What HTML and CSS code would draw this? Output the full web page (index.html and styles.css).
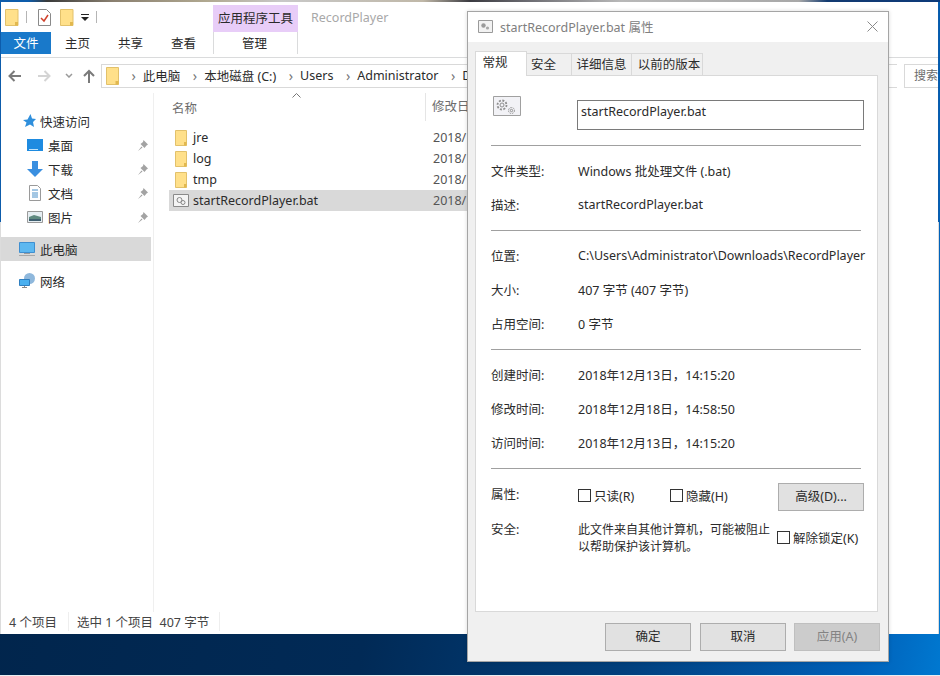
FILE: index.html
```html
<!DOCTYPE html>
<html lang="en">
<head>
    <meta charset="UTF-8">
    <title>startRecordPlayer.bat 属性</title>
    <link rel="stylesheet" href="styles.css">
</head>
<body>
<div class="desktop">
    <div class="explorer">
        <div class="titlebar">
            <svg class="qa-icon" width="14" height="17" viewBox="0 0 14 17"><path d="M.5.5h12.500v16H.5z" fill="#ffe08a" stroke="#e2c16b"/><path d="M10 13h3v3.500h-3z" fill="#e2b84f"/></svg>
            <span class="qa-sep"></span>
            <svg class="qa-icon qa-doc" width="13" height="17" viewBox="0 0 13 17"><path d="M.5.5h8l4 4v12H.500z" fill="#fff" stroke="#8a8a8a"/><path d="M3 9l3 3 4-6" fill="none" stroke="#d0412b" stroke-width="1.500"/></svg>
            <svg class="qa-icon" width="14" height="17" viewBox="0 0 14 17"><path d="M.5.5h12.500v16H.5z" fill="#ffe08a" stroke="#e2c16b"/><path d="M10 13h3v3.500h-3z" fill="#e2b84f"/></svg>
            <svg class="qa-icon" width="8" height="7" viewBox="0 0 8 7"><path d="M0 0h8v1H0zM0 3h8L4 7z" fill="#222"/></svg>
            <span class="qa-sep"></span>
            <div class="context-tab">应用程序工具</div>
            <div class="window-name">RecordPlayer</div>
        </div>
        <div class="tabbar">
            <div class="tab tab-file">文件</div>
            <div class="tab">主页</div>
            <div class="tab">共享</div>
            <div class="tab">查看</div>
            <div class="tab tab-manage">管理</div>
        </div>
        <div class="addressbar">
            <div class="nav-buttons">
                <svg width="13" height="12" viewBox="0 0 13 12"><path d="M13 6H2M6.500 1 1.500 6l5 5" fill="none" stroke="#7a7a7a" stroke-width="2"/></svg>
                <svg width="13" height="12" viewBox="0 0 13 12"><path d="M0 6h11M6.500 1l5 5-5 5" fill="none" stroke="#d4d4d4" stroke-width="2"/></svg>
                <svg width="8" height="5" viewBox="0 0 8 5"><path d="M1 1l3 3 3-3" fill="none" stroke="#9a9a9a" stroke-width="1.500"/></svg>
                <svg width="12" height="14" viewBox="0 0 12 14"><path d="M6 14V2M1 7l5-5 5 5" fill="none" stroke="#7a7a7a" stroke-width="2"/></svg>
            </div>
            <div class="path-box">
                <svg width="13" height="18" viewBox="0 0 13 18"><path d="M.5.5h12v17H.5z" fill="#ffe08a" stroke="#e2c16b"/><path d="M9.500 14h3v3.500h-3z" fill="#e2b84f"/></svg>
                <span class="crumb-sep">›</span><span>此电脑</span>
                <span class="crumb-sep">›</span><span>本地磁盘 (C:)</span>
                <span class="crumb-sep">›</span><span>Users</span>
                <span class="crumb-sep">›</span><span>Administrator</span>
                <span class="crumb-sep">›</span><span>D</span>
            </div>
            <div class="search-box">搜索</div>
        </div>
        <div class="main">
            <div class="sidebar">
                <div class="side-row side-head">
                    <svg width="14" height="14" viewBox="0 0 14 14"><path d="M8.500 0l1.500 4.500 4 .5-3 3 1 5-4-2.500L3 13l1.500-4.500L1 6l4.500-.5z" fill="#2f8fdc"/></svg>
                    <span>快速访问</span>
                </div>
                <div class="side-row side-sub">
                    <svg width="16" height="12" viewBox="0 0 16 12"><path d="M0 0h16v12H0z" fill="#1e8be0"/><path d="M2 10h9v1H2z" fill="#bfe3fb"/></svg>
                    <span>桌面</span><svg class="pin" width="10" height="11" viewBox="0 0 10 11"><path d="M5.500 0L10 4.500 8.500 5.500 6.500 8 2.500 4 5 2zM3.500 6.500L0 11l4.500-3.500z" fill="#a3a3a3"/></svg>
                </div>
                <div class="side-row side-sub">
                    <svg width="16" height="16" viewBox="0 0 16 16"><path d="M5 0h6v8h5l-8 8-8-8h5z" fill="#3a8fe0"/></svg>
                    <span>下载</span><svg class="pin" width="10" height="11" viewBox="0 0 10 11"><path d="M5.500 0L10 4.500 8.500 5.500 6.500 8 2.500 4 5 2zM3.500 6.500L0 11l4.500-3.500z" fill="#a3a3a3"/></svg>
                </div>
                <div class="side-row side-sub">
                    <svg width="16" height="16" viewBox="0 0 16 16"><path d="M2.500.5h8l3 3v12h-11z" fill="#fff" stroke="#9a9a9a"/><path d="M5 5h6M5 8h6M5 10h6M5 12h6" stroke="#4a90c8"/></svg>
                    <span>文档</span><svg class="pin" width="10" height="11" viewBox="0 0 10 11"><path d="M5.500 0L10 4.500 8.500 5.500 6.500 8 2.500 4 5 2zM3.500 6.500L0 11l4.500-3.500z" fill="#a3a3a3"/></svg>
                </div>
                <div class="side-row side-sub">
                    <svg width="16" height="12" viewBox="0 0 16 12"><path d="M.5.5h15v11H.5z" fill="#e6eef2" stroke="#9a9a9a"/><path d="M2 6l5-2 7 2v2H2z" fill="#5f8a80"/><path d="M2 8h12v2H2z" fill="#3f5f70"/></svg>
                    <span>图片</span><svg class="pin" width="10" height="11" viewBox="0 0 10 11"><path d="M5.500 0L10 4.500 8.500 5.500 6.500 8 2.500 4 5 2zM3.500 6.500L0 11l4.500-3.500z" fill="#a3a3a3"/></svg>
                </div>
                <div class="side-row side-pc">
                    <svg width="16" height="15" viewBox="0 0 16 15"><path d="M.5.5h15v10H.5z" fill="#5db8f0" stroke="#3f8fd0"/><path d="M5 11h6v1H5z" fill="#9a9a9a"/><path d="M0 13h16v1H0z" fill="#a8a8a8"/></svg>
                    <span>此电脑</span>
                </div>
                <div class="side-row side-net">
                    <svg width="16" height="16" viewBox="0 0 16 16"><circle cx="10.500" cy="5.500" r="5.500" fill="#8fb8dc"/><path d="M.5 6.500h10v6H.5z" fill="#4ab0f0" stroke="#2f7fc0"/><path d="M5 13h1v1H5zM3 14h5v1H3z" fill="#8a8a8a"/></svg>
                    <span>网络</span>
                </div>
            </div>
            <div class="files">
                <div class="file-head">
                    <span class="col-name">名称</span>
                    <span class="col-date">修改日</span>
                    <svg class="sort-caret" width="9" height="5" viewBox="0 0 9 5"><path d="M.5 4.500l4-4 4 4" fill="none" stroke="#777"/></svg>
                </div>
                <div class="file-row">
                    <svg width="12" height="16" viewBox="0 0 12 16"><path d="M.5.5h11v15H.5z" fill="#ffe08a" stroke="#e2c16b"/><path d="M9 12h2.500v3.500H9z" fill="#e2b84f"/></svg>
                    <span class="file-name">jre</span><span class="file-date">2018/1</span>
                </div>
                <div class="file-row">
                    <svg width="12" height="16" viewBox="0 0 12 16"><path d="M.5.5h11v15H.5z" fill="#ffe08a" stroke="#e2c16b"/><path d="M9 12h2.500v3.500H9z" fill="#e2b84f"/></svg>
                    <span class="file-name">log</span><span class="file-date">2018/1</span>
                </div>
                <div class="file-row">
                    <svg width="12" height="16" viewBox="0 0 12 16"><path d="M.5.5h11v15H.5z" fill="#ffe08a" stroke="#e2c16b"/><path d="M9 12h2.500v3.500H9z" fill="#e2b84f"/></svg>
                    <span class="file-name">tmp</span><span class="file-date">2018/1</span>
                </div>
                <div class="file-row file-selected">
                    <svg width="16" height="13" viewBox="0 0 16 13"><path d="M.5.5h15v12H.5z" fill="#f4f4f4" stroke="#8a8a8a"/><circle cx="6.500" cy="6" r="2.500" fill="none" stroke="#888"/><circle cx="10" cy="8.500" r="2" fill="none" stroke="#888"/></svg>
                    <span class="file-name">startRecordPlayer.bat</span><span class="file-date">2018/1</span>
                </div>
            </div>
        </div>
        <div class="statusbar">
            <span class="status-cell">4 个项目</span>
            <span class="status-cell status-selected">选中 1 个项目&nbsp;&nbsp;407 字节</span>
        </div>
    </div>

    <div class="dialog">
        <div class="dialog-title">
            <svg width="15" height="13" viewBox="0 0 15 13"><path d="M.5.5h14v12H.5z" fill="#f2f2f2" stroke="#9a9a9a"/><circle cx="5.500" cy="5.500" r="2.200" fill="#9a9a9a"/><circle cx="9.500" cy="8" r="1.600" fill="#a8a8a8"/></svg>
            <span>startRecordPlayer.bat 属性</span>
            <svg class="dialog-close" width="11" height="11" viewBox="0 0 11 11"><path d="M.5.5l10 10M10.500.5l-10 10" stroke="#8a8a8a"/></svg>
        </div>
        <div class="dialog-body">
            <div class="dialog-tabs">
                <div class="dtab dtab-active">常规</div>
                <div class="dtab dtab-sec">安全</div>
                <div class="dtab dtab-detail">详细信息</div>
                <div class="dtab dtab-prev">以前的版本</div>
            </div>
            <div class="panel">
                <div class="name-row">
                    <svg width="28" height="20" viewBox="0 0 28 20"><path d="M.5.5h27v19H.500z" fill="#f2f2f6" stroke="#a0a0a0"/><g fill="none" stroke="#8f8f8f"><circle cx="9" cy="9" r="2"/><circle cx="9" cy="9" r="4.500" stroke-dasharray="2 1.500" stroke-width="1.800"/><circle cx="18.500" cy="14.500" r="1.200"/><circle cx="18.500" cy="14.500" r="3" stroke-dasharray="1.500 1"/></g></svg>
                    <div class="name-input">startRecordPlayer.bat</div>
                </div>
                <hr class="sep">
                <div class="info-row"><span class="info-label">文件类型:</span><span>Windows 批处理文件 (.bat)</span></div>
                <div class="info-row"><span class="info-label">描述:</span><span>startRecordPlayer.bat</span></div>
                <hr class="sep">
                <div class="info-row"><span class="info-label">位置:</span><span>C:\Users\Administrator\Downloads\RecordPlayer</span></div>
                <div class="info-row"><span class="info-label">大小:</span><span>407 字节 (407 字节)</span></div>
                <div class="info-row"><span class="info-label">占用空间:</span><span>0 字节</span></div>
                <hr class="sep">
                <div class="info-row"><span class="info-label">创建时间:</span><span>2018年12月13日，14:15:20</span></div>
                <div class="info-row"><span class="info-label">修改时间:</span><span>2018年12月18日，14:58:50</span></div>
                <div class="info-row"><span class="info-label">访问时间:</span><span>2018年12月13日，14:15:20</span></div>
                <hr class="sep">
                <div class="attr-row">
                    <span class="info-label">属性:</span>
                    <label class="check check-read"><span class="box"></span>只读(R)</label>
                    <label class="check check-hidden"><span class="box"></span>隐藏(H)</label>
                    <div class="btn btn-adv">高级(D)...</div>
                </div>
                <div class="security-row">
                    <span class="info-label">安全:</span>
                    <div class="security-text">此文件来自其他计算机，可能被阻止<br>以帮助保护该计算机。</div>
                    <label class="check check-unblock"><span class="box"></span>解除锁定(K)</label>
                </div>
            </div>
            <div class="dialog-buttons">
                <div class="btn">确定</div>
                <div class="btn">取消</div>
                <div class="btn btn-disabled">应用(A)</div>
            </div>
        </div>
    </div>
</div>
</body>
</html>
```
FILE: styles.css
```css
* {
    box-sizing: border-box;
}
html, body {
    margin: 0;
    padding: 0;
}
body {
    font-family: "Noto Sans", "Noto Sans CJK SC", sans-serif;
    font-size: 12.5px;
    color: #2b2b2b;
    background-color: #fff;
    overflow: hidden;
}
.desktop {
    position: relative;
    width: 940px;
    height: 676px;
    padding: 2px 1px 41px 0;
    background:
        linear-gradient(90deg, #0d5cab 3%, #3a3a3a 5%, #8a8070 12%, #b0a890 22%, #c8c8c8 30%, #c0b8a8 45%, #3a3a40 50%, #6a6a70 56%, #b8b8b8 66%, #a8a8a8 85%, #123a70 88%, #0d3a7a 100%) top / 100% 2px no-repeat,
        linear-gradient(100deg, #01244a 0%, #012a56 45%, #013f7c 70%, #0060b8 92%, #0078d0 100%);
    border-bottom: 1px solid #e8eef2;
}
svg {
    display: block;
    flex: none;
}

/* explorer window */
.explorer {
    display: flex;
    flex-direction: column;
    height: 632px;
    background-color: #fff;
    border-left: 1px solid;
    border-right: 1px solid;
    border-image: linear-gradient(to bottom, #0d5cab 220px, #dcdcdc 220px) 1;
}
.titlebar {
    display: flex;
    align-items: center;
    height: 30px;
    padding-left: 4px;
}
.qa-icon {
    margin-right: 7px;
}
.qa-doc {
    margin-right: 9px;
}
.qa-sep {
    width: 1px;
    height: 12px;
    background-color: #b5b5b5;
    margin-right: 11px;
}
.context-tab {
    width: 85px;
    height: 27px;
    align-self: flex-end;
    margin-left: 105px;
    background-color: #e8cdf8;
    text-align: center;
    line-height: 27px;
}
.window-name {
    margin-left: 13px;
    color: #a8a8a8;
}
.tabbar {
    display: flex;
    height: 26px;
    border-bottom: 1px solid #dadbdc;
    padding-bottom: 3px;
}
.tab {
    width: 53px;
    text-align: center;
    line-height: 23px;
}
.tab-file {
    width: 50px;
    background-color: #1979ca;
    color: #fff;
}
.tab-manage {
    width: 85px;
    margin-left: 3px;
    padding-right: 2px;
    border-left: 1px solid #dadbdc;
    border-right: 1px solid #dadbdc;
}
.addressbar {
    display: flex;
    align-items: center;
    height: 35px;
}
.nav-buttons {
    display: flex;
    align-items: center;
    width: 100px;
    padding-left: 7px;
}
.nav-buttons svg:nth-child(2) {
    margin-left: 17px;
}
.nav-buttons svg:nth-child(3) {
    margin-left: 14px;
}
.nav-buttons svg:nth-child(4) {
    margin-left: 10px;
}
.path-box {
    display: flex;
    align-items: center;
    gap: 7px;
    width: 796px;
    height: 24px;
    border: 1px solid #d9d9d9;
    border-right: none;
    padding-left: 4px;
    overflow: hidden;
    white-space: nowrap;
}
.crumb-sep {
    color: #777;
    font-size: 14px;
    margin-left: 5.5px;
}
.search-box {
    width: 34px;
    height: 24px;
    margin-left: 7px;
    border: 1px solid #d9d9d9;
    border-right: none;
    color: #6d6d6d;
    font-size: 12px;
    line-height: 22px;
    padding-left: 9px;
    overflow: hidden;
    white-space: nowrap;
}
.main {
    display: flex;
    flex: 1;
    min-height: 0;
}
.sidebar {
    width: 153px;
    border-right: 1px solid #efefef;
    padding-top: 16px;
}
.side-row {
    display: flex;
    align-items: center;
    height: 24px;
    gap: 4px;
}
.side-head {
    padding-left: 21px;
}
.side-sub {
    padding-left: 26px;
    gap: 5px;
}
.side-sub .pin {
    margin-left: auto;
    margin-right: 5px;
}
.side-pc {
    width: 150px;
    margin-top: 8px;
    padding-left: 18px;
    background-color: #d9d9d9;
    gap: 5px;
}
.side-net {
    margin-top: 8px;
    padding-left: 18px;
    gap: 5px;
}
.files {
    position: relative;
    flex: 1;
    padding-left: 15px;
}
.file-head {
    display: flex;
    align-items: center;
    height: 28px;
    color: #6d6d6d;
    margin-bottom: 6px;
}
.col-name {
    margin-left: 3px;
}
.col-date {
    margin-left: 228px;
    padding-left: 6px;
    border-left: 1px solid #e5e5e5;
    line-height: 28px;
}
.sort-caret {
    position: absolute;
    left: 138px;
    top: 0;
}
.file-row {
    display: flex;
    align-items: center;
    height: 21px;
    padding-left: 6px;
}
.file-name {
    width: 240px;
    margin-left: 6px;
}
.file-date {
    color: #555;
}
.file-selected {
    width: 310px;
    background-color: #d9d9d9;
    padding-left: 4px;
}
.file-selected .file-name {
    margin-left: 4px;
}
.statusbar {
    display: flex;
    align-items: center;
    height: 22px;
    padding-bottom: 4px;
    color: #444;
}
.status-cell {
    padding: 0 11px 0 8px;
    border-right: 1px solid #eee;
}
.status-selected {
    padding-right: 10px;
}

/* properties dialog */
.dialog {
    position: absolute;
    left: 467px;
    top: 11px;
    width: 422px;
    height: 651px;
    display: flex;
    flex-direction: column;
    background-color: #f0f0f0;
    border: 1px solid #a5a5a5;
    box-shadow: 0 0 4px rgba(0,0,0,0.15);
}
.dialog-title {
    display: flex;
    align-items: center;
    gap: 7px;
    height: 30px;
    flex: none;
    padding-left: 10px;
    padding-bottom: 2px;
    background-color: #fff;
    color: #808080;
}
.dialog-close {
    margin-left: auto;
    margin-right: 10px;
}
.dialog-body {
    flex: 1;
    padding: 11px 10px 0 7px;
}
.dialog-tabs {
    display: flex;
    align-items: flex-end;
    height: 22px;
}
.dtab {
    height: 22px;
    line-height: 22px;
    text-align: center;
    background-color: #f0f0f0;
    border: 1px solid #d9d9d9;
    border-bottom: none;
    border-left: none;
}
.dtab-active {
    position: relative;
    z-index: 1;
    height: 25px;
    width: 52px;
    margin-bottom: -1px;
    background-color: #fff;
    border-left: 1px solid #d9d9d9;
    line-height: 22px;
    padding-right: 12px;
}
.dtab-sec {
    width: 45px;
    padding-right: 11px;
}
.dtab-detail {
    width: 60px;
}
.dtab-prev {
    width: 71px;
    padding-left: 4px;
}
.panel {
    height: 537px;
    background-color: #fff;
    border: 1px solid #d9d9d9;
    padding: 0 15px;
}
.name-row {
    display: flex;
    align-items: flex-start;
    height: 69px;
    padding-top: 20px;
    padding-left: 2px;
}
.name-input {
    flex: none;
    width: 287px;
    height: 30px;
    margin-left: 56px;
    margin-top: 4px;
    border: 1px solid #7a7a7a;
    padding: 2px 3px;
    line-height: 17px;
}
.sep {
    width: 370px;
    height: 1px;
    margin: 0;
    border: none;
    background-color: #a0a0a0;
}
.info-row {
    display: flex;
    align-items: center;
    height: 34px;
    white-space: nowrap;
}
.sep + .info-row {
    margin-top: 7px;
}
.info-row + .sep {
    margin-top: 9px;
}
.info-label {
    width: 87px;
    flex: none;
}
.attr-row {
    display: flex;
    align-items: center;
    height: 34px;
    margin-top: 9px;
}
.attr-row .info-label {
    margin-bottom: 4px;
}
.check {
    display: flex;
    align-items: center;
    gap: 3px;
}
.check-read {
    width: 92px;
}
.box {
    width: 13px;
    height: 13px;
    background-color: #fff;
    border: 1px solid #333;
}
.btn {
    width: 86px;
    height: 28px;
    line-height: 26px;
    text-align: center;
    background-color: #e1e1e1;
    border: 1px solid #adadad;
}
.btn-adv {
    margin-left: auto;
    margin-right: -2px;
    margin-top: 3px;
}
.btn-disabled {
    margin-left: -1px;
    background-color: #cccccc;
    border-color: #bfbfbf;
    color: #838383;
}
.security-row {
    display: flex;
    align-items: center;
    margin-top: 9px;
}
.security-row .info-label {
    align-self: flex-start;
    line-height: 17px;
}
.security-text {
    width: 200px;
    font-size: 12px;
    line-height: 17px;
    white-space: nowrap;
}
.check-unblock {
    margin-left: -1px;
    margin-bottom: 2px;
    white-space: nowrap;
}
.dialog-buttons {
    display: flex;
    justify-content: flex-end;
    gap: 9px;
    margin-top: 11px;
    margin-right: -2px;
}
```
